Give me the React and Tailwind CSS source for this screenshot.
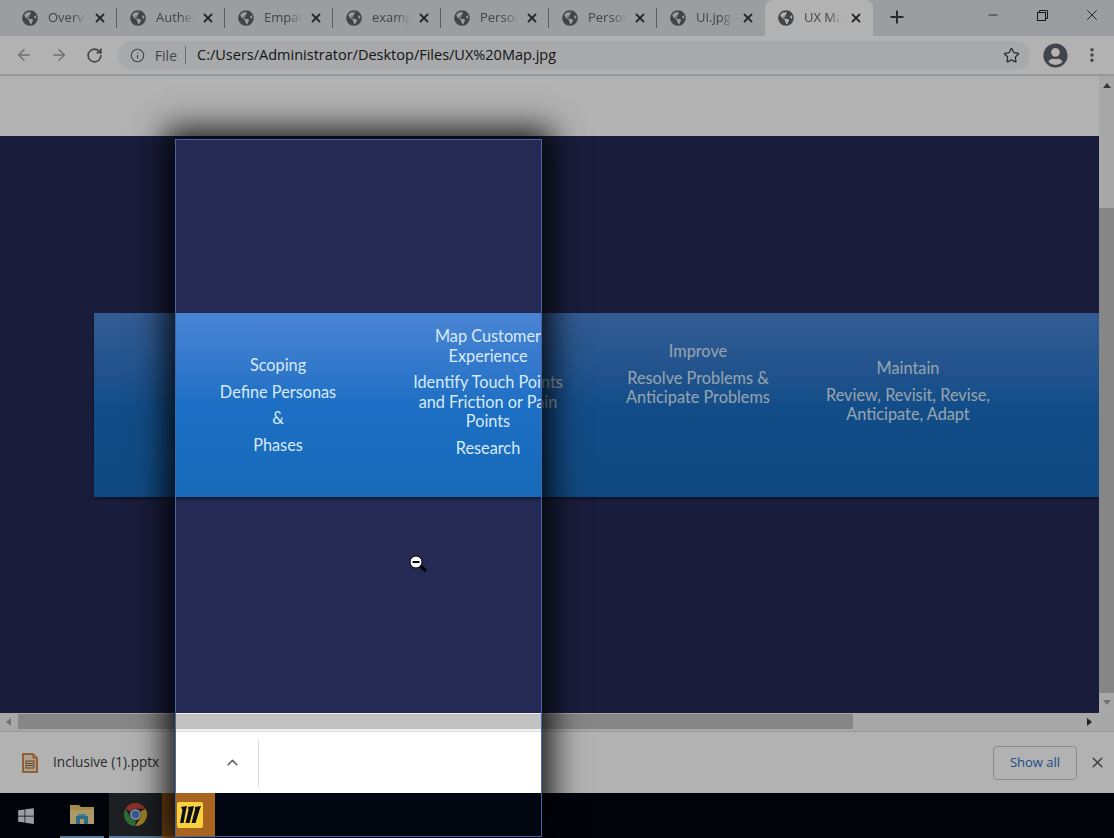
import { ArrowLeft, ArrowRight, ChevronUp, EllipsisVertical, Info, Minus, Plus, RotateCw, Star, X } from 'lucide-react';
import { FaGlobeAmericas, FaUserCircle, FaWindows } from 'react-icons/fa';

const tabs = ['Overview', 'Authentic', 'Empathy', 'examples', 'Persona', 'Persona', 'UI.jpg', 'UX Map'];

const columns = [
  { top: 'mt-[42px]', blocks: [['Scoping'], ['Define Personas'], ['&'], ['Phases']] },
  { top: 'mt-[13px]', blocks: [['Map Customer', 'Experience'], ['Identify Touch Points', 'and Friction or Pain', 'Points'], ['Research']] },
  { top: 'mt-[28px]', blocks: [['Improve'], ['Resolve Problems &', 'Anticipate Problems']] },
  { top: 'mt-[45px]', blocks: [['Maintain'], ['Review, Revisit, Revise,', 'Anticipate, Adapt']] },
];

function Tab({ label, active, last }) {
  return (
    <div className={`relative flex h-[36px] w-[108px] items-center pl-[13px] pr-[10px] ${active ? 'rounded-t-lg bg-white' : ''}`}>
      <FaGlobeAmericas className="shrink-0 text-[16px] text-[#5f6368]" />
      <span className="ml-[10px] w-[38px] overflow-hidden whitespace-nowrap text-[13px] text-[#5f6368] [mask-image:linear-gradient(to_right,black_65%,transparent)]">
        {label}
      </span>
      <X size={14} strokeWidth={3.2} className="ml-auto shrink-0 text-[#3c4043]" />
      {!active && !last && <div className="absolute right-0 top-[8px] h-[20px] w-px bg-[#80868b]" />}
    </div>
  );
}

function Chrome() {
  return (
    <div className="flex h-[76px] flex-col">
      <div className="flex h-[36px] items-start bg-[#dee1e6] pl-[9px]">
        {tabs.map((label, i) => (
          <Tab key={i} label={label} active={i === 7} last={i === 6} />
        ))}
        <Plus size={20} strokeWidth={2.4} className="ml-[14px] mt-[7px] text-[#3c4043]" />
        <div className="ml-auto flex">
          <div className="flex h-[30px] w-[50px] items-center justify-center">
            <Minus size={14} strokeWidth={1.4} className="text-[#202124]" />
          </div>
          <div className="flex h-[30px] w-[50px] items-center justify-center pr-[2px]">
            <svg width="11" height="11" viewBox="0 0 11 11" fill="none" stroke="#202124" strokeWidth="1">
              <rect x="0.5" y="2.5" width="8" height="8" />
              <path d="M2.5 2.5V0.5H10.5V8.5H8.5" />
            </svg>
          </div>
          <div className="flex h-[30px] w-[46px] items-center justify-center pl-[2px]">
            <X size={18} strokeWidth={1.2} className="text-[#202124]" />
          </div>
        </div>
      </div>
      <div className="flex h-[40px] items-center border-b-2 border-[#dadce0] bg-white pl-[15px] pr-[13px]">
        <ArrowLeft size={18} strokeWidth={1.8} className="text-[#9aa0a6]" />
        <ArrowRight size={18} strokeWidth={1.8} className="ml-[17px] text-[#9aa0a6]" />
        <RotateCw size={17} strokeWidth={2.4} className="ml-[18px] text-[#5f6368]" />
        <div className="ml-[15px] flex h-[29px] w-[915px] items-center rounded-full bg-[#f1f3f4] pl-[12px]">
          <Info size={15} strokeWidth={1.8} className="text-[#5f6368]" />
          <span className="ml-[10px] text-[14px] text-[#5f6368]">File</span>
          <div className="ml-[8px] h-[18px] w-px bg-[#9aa0a6]" />
          <span className="ml-[11px] text-[14.5px] text-[#202124]">C:/Users/Administrator/Desktop/Files/UX%20Map.jpg</span>
          <Star size={17} strokeWidth={1.8} className="ml-auto mr-[10px] text-[#3c4043]" />
        </div>
        <FaUserCircle className="ml-[13px] text-[25px] text-[#5f6368]" />
        <EllipsisVertical size={18} strokeWidth={2.6} className="ml-[15px] text-[#5f6368]" />
      </div>
    </div>
  );
}

function Banner() {
  return (
    <div className="flex h-[184px] bg-gradient-to-b from-[#4a85d4] via-[#1c6fc4] via-50% to-[#186ab9] pl-[79px] font-['Lato',sans-serif] text-[16.3px] leading-[19.5px] text-[#d8eafa] shadow-[0_2px_3px_rgba(0,0,0,0.4)]">
      {columns.map((col, i) => (
        <div key={i} className={`flex w-[210px] shrink-0 flex-col gap-[7px] text-center ${col.top}`}>
          {col.blocks.map((lines, j) => (
            <p key={j}>
              {lines.map((line) => (
                <span key={line} className="block whitespace-nowrap">{line}</span>
              ))}
            </p>
          ))}
        </div>
      ))}
    </div>
  );
}

function Scrollbars() {
  return (
    <div className="flex w-[15px] flex-col items-center bg-[#f1f1f1]">
      <div className="mt-[7px] h-0 w-0 border-x-[4px] border-b-[5px] border-x-transparent border-b-[#505050]" />
      <div className="mt-[120px] h-[485px] w-full bg-[#c1c1c1]" />
      <div className="mt-[7px] h-0 w-0 border-x-[4px] border-t-[5px] border-x-transparent border-t-[#a3a3a3]" />
    </div>
  );
}

function FileIcon() {
  return (
    <svg width="16" height="20" viewBox="0 0 16 20" fill="none">
      <path d="M1 1H11L15 5V19H1Z" fill="#fbe6cf" stroke="#c2671c" strokeWidth="1.5" />
      <path d="M11 1V5H15" fill="#eec08f" stroke="#c2671c" strokeWidth="1" />
      <rect x="4" y="8" width="8" height="7" fill="none" stroke="#8a5a30" strokeWidth="1" />
      <path d="M5 10.5H11M5 12.5H11" stroke="#8a5a30" strokeWidth="1" />
    </svg>
  );
}

function FolderIcon() {
  return (
    <svg width="24" height="21" viewBox="0 0 24 21">
      <path d="M0 1H9L11 3H24V20H0Z" fill="#eec868" />
      <rect y="6" width="24" height="14" fill="#f5dc94" />
      <rect x="6" y="12" width="12" height="8" fill="#3f9bc4" />
      <rect x="10" y="15" width="4" height="5" fill="#f5dc94" />
      <rect x="8" y="10" width="8" height="2" fill="#63b6d8" />
    </svg>
  );
}

function ChromeIcon() {
  return (
    <svg width="25" height="25" viewBox="0 0 26 26">
      <path d="M13 1A12 12 0 0 1 23.4 7H13A6 6 0 0 0 7.8 10L2.6 7A12 12 0 0 1 13 1Z" fill="#c9473c" />
      <path d="M23.4 7A12 12 0 0 1 13 25L18.2 16A6 6 0 0 0 18.2 10Z" fill="#e3b52f" />
      <path d="M2.6 7L7.8 16A6 6 0 0 0 13 19L13 25A12 12 0 0 1 2.6 7Z" fill="#3f9c4f" />
      <circle cx="13" cy="13" r="5.5" fill="#eef0f4" />
      <circle cx="13" cy="13" r="4.2" fill="#4a80d8" />
    </svg>
  );
}

function MiroIcon() {
  return (
    <svg width="26" height="26" viewBox="0 0 26 26">
      <rect width="26" height="26" rx="2" fill="#f7d23e" />
      <path d="M4 5L10 4L9 8L6.5 21H3L5.5 8ZM11 5L17 4L16 8L12.5 21H8.5L11.5 8ZM18 5L24 4L22.5 8L18.5 21H14.5L18 8Z" fill="#0d0d1c" />
    </svg>
  );
}

function Screen() {
  return (
    <div className="flex h-[838px] w-[1114px] flex-col bg-white font-['Open_Sans',sans-serif]">
      <Chrome />
      <div className="flex h-[637px]">
        <div className="flex min-w-0 flex-1 flex-col">
          <div className="h-[60px] bg-white" />
          <div className="flex-1 bg-[#252a55] pl-[94px] pt-[177px]">
            <Banner />
          </div>
        </div>
        <Scrollbars />
      </div>
      <div className="flex h-[18px] items-center bg-[#f1f1f1]">
        <div className="ml-[6px] h-0 w-0 border-y-[4px] border-r-[5px] border-y-transparent border-r-[#a3a3a3]" />
        <div className="mb-[2px] mt-px ml-[7px] h-[15px] w-[835px] bg-[#c1c1c1]" />
        <div className="ml-[234px] h-0 w-0 border-y-[4px] border-l-[5px] border-y-transparent border-l-[#303030]" />
      </div>
      <div className="flex h-[62px] items-center border-t border-[#dadce0] bg-white pl-[22px] pr-[8px]">
        <FileIcon />
        <span className="ml-[15px] w-[171px] text-[13.6px] text-[#3c4043]">Inclusive (1).pptx</span>
        <ChevronUp size={17} strokeWidth={2.2} className="text-[#5f6368]" />
        <div className="ml-[17px] h-[47px] w-px bg-[#dadce0]" />
        <div className="ml-auto flex h-[34px] w-[84px] items-center justify-center rounded border border-[#c4c7cc] text-[13px] font-medium text-[#2a6fc4]">
          Show all
        </div>
        <X size={17} strokeWidth={2.2} className="ml-[12px] text-[#5f6368]" />
      </div>
      <div className="flex h-[45px] items-center bg-[#030712]">
        <div className="flex w-[60px] justify-center pr-[8px]">
          <FaWindows className="text-[18px] text-[#dfe3e8]" />
        </div>
        <div className="flex h-full w-[44px] items-center justify-center border-b-2 border-[#7fb0dc]">
          <FolderIcon />
        </div>
        <div className="ml-[5px] flex h-full w-[53px] items-center justify-center border-b-2 border-[#7fb0dc] bg-[#2a2f33]">
          <ChromeIcon />
        </div>
        <div className="flex h-full w-[53px] items-center justify-center border-b-2 border-[#d98c45] bg-[#a8651f] pl-[3px]">
          <MiroIcon />
        </div>
      </div>
    </div>
  );
}

function ZoomCursor() {
  return (
    <svg className="absolute left-[233px] top-[415px]" width="20" height="20" viewBox="0 0 20 20">
      <path d="M9 9L17 16" stroke="#000" strokeWidth="3" />
      <circle cx="7" cy="7" r="6" fill="#fff" stroke="#000" strokeWidth="1" />
      <rect x="3.5" y="6" width="7" height="2" fill="#000" />
    </svg>
  );
}

export default function App() {
  return (
    <div className="relative h-[838px] w-[1114px] overflow-hidden">
      <Screen />
      {/* dimmed layer of the snipping overlay */}
      <div className="absolute inset-0 bg-black/30" />
      {/* the selected region shows the page undimmed */}
      <div className="absolute left-[175px] top-[139px] h-[698px] w-[367px] overflow-hidden border border-[#4766a8] shadow-[0_0_30px_10px_rgba(0,0,0,0.85)]">
        <div className="absolute left-[-176px] top-[-140px]">
          <Screen />
        </div>
        <ZoomCursor />
      </div>
    </div>
  );
}
